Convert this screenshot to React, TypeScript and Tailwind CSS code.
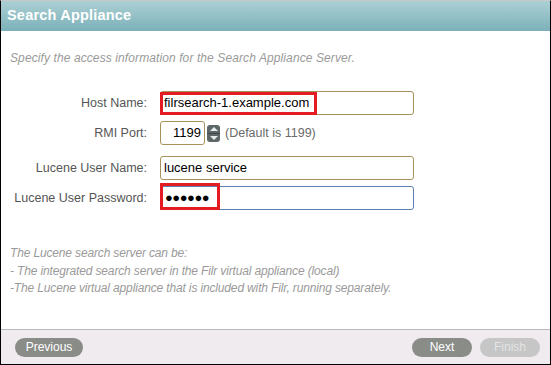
import React from 'react';

const fieldBox = 'h-6 rounded-[3px] border bg-white flex items-center text-[13px] text-black';

const App = () => {
  return (
    <div className="w-[551px] h-[365px] flex flex-col bg-white border-x border-b border-black border-t border-t-[#c8c8c8] font-['Liberation_Sans',Arial,sans-serif] overflow-hidden">
      {/* Header */}
      <div className="h-[30px] shrink-0 bg-gradient-to-b from-[#abd0d4] to-[#7cb1b9] flex items-center px-[6px]">
        <h1 className="text-white font-bold text-[14.5px] tracking-[0.2px]">Search Appliance</h1>
      </div>

      {/* Body */}
      <div className="flex-1 flex flex-col">
        <p className="mt-[20px] ml-[9px] text-[12px] italic text-[#9a9a9a] leading-[14px] tracking-[0.1px]">
          Specify the access information for the Search Appliance Server.
        </p>

        <div className="mt-[26px] grid grid-cols-[159px_1fr] items-center text-[12.5px] text-[#555]">
          <div className="text-right pr-[13px]">Host Name:</div>
          <div className="relative">
            <div className={`${fieldBox} w-[254px] border-[#a8925c] pl-[3px]`}>filrsearch-1.example.com</div>
            <div className="absolute left-0 top-[1px] w-[157px] h-[23px] border-[3px] border-[#e41b23]" />
          </div>

          <div className="text-right pr-[13px] mt-[6px]">RMI Port:</div>
          <div className="mt-[6px] flex items-center">
            <div className={`${fieldBox} w-[45px] border-[#a8925c] justify-end pr-[3px]`}>1199</div>
            <div className="ml-[2px] mt-[1px] w-[13px] h-[17px] rounded-[3px] bg-[#5d6767] flex flex-col items-center justify-center gap-[2px]">
              <svg width="8" height="4" viewBox="0 0 8 4"><path d="M0 4 L4 0 L8 4 Z" fill="#e8ecec" /></svg>
              <div className="w-[13px] h-px bg-[#3e4646]" />
              <svg width="8" height="4" viewBox="0 0 8 4"><path d="M0 0 L8 0 L4 4 Z" fill="#e8ecec" /></svg>
            </div>
            <span className="ml-[5px] text-[#6a6a6a]">(Default is 1199)</span>
          </div>

          <div className="text-right pr-[13px] mt-[11px]">Lucene User Name:</div>
          <div className="mt-[11px]">
            <div className={`${fieldBox} w-[254px] border-[#a8925c] pl-[3px]`}>lucene service</div>
          </div>

          <div className="text-right pr-[13px] mt-[6px]">Lucene User Password:</div>
          <div className="mt-[6px] relative">
            <div className={`${fieldBox} w-[254px] border-[#5a7fb4] pl-[4px] text-[11px] tracking-[-0.5px]`}>●●●●●●</div>
            <div className="absolute left-0 -top-[3px] w-[60px] h-[27px] border-[3px] border-[#e41b23]" />
          </div>
        </div>

        <div className="mt-[35px] ml-[9px] text-[12px] italic text-[#9a9a9a] leading-[17.5px] tracking-[-0.15px]">
          <p>The Lucene search server can be:</p>
          <p>- The integrated search server in the Filr virtual appliance (local)</p>
          <p>-The Lucene virtual appliance that is included with Filr, running separately.</p>
        </div>
      </div>

      {/* Footer */}
      <div className="h-[35px] shrink-0 border-t border-[#b8b8b8] bg-[#efebef] flex items-center px-[14px]">
        <button className="h-[19px] w-[68px] rounded-full bg-[#8a8c88] text-white text-[12px]">Previous</button>
        <div className="flex-1" />
        <button className="h-[19px] w-[60px] rounded-full bg-[#8a8c88] text-white text-[12px]">Next</button>
        <button className="ml-[8px] h-[19px] w-[60px] rounded-full bg-[#c6c6c6] text-[#e4e4e4] text-[12px] mr-[-4px]">Finish</button>
      </div>
    </div>
  );
};

export default App;
